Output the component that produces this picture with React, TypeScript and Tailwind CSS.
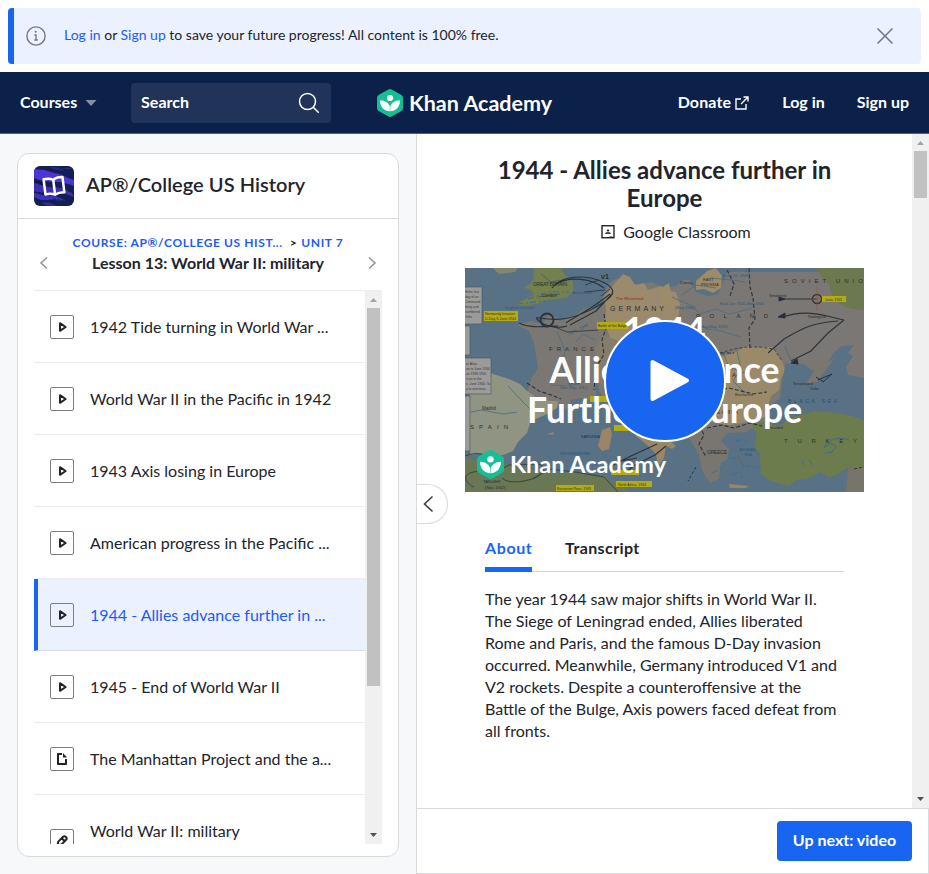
import React from "react";

type Kind = "video" | "article" | "exercise";

const lessons: { title: string; kind: Kind; active?: boolean }[] = [
  { title: "1942 Tide turning in World War ...", kind: "video" },
  { title: "World War II in the Pacific in 1942", kind: "video" },
  { title: "1943 Axis losing in Europe", kind: "video" },
  { title: "American progress in the Pacific ...", kind: "video" },
  { title: "1944 - Allies advance further in ...", kind: "video", active: true },
  { title: "1945 - End of World War II", kind: "video" },
  { title: "The Manhattan Project and the a...", kind: "article" },
  { title: "World War II: military", kind: "exercise" },
];

function LessonIcon({ kind }: { kind: Kind }) {
  return (
    <svg width="24" height="24" viewBox="0 0 24 24" fill="none" className="shrink-0">
      <rect x="0.5" y="0.5" width="23" height="23" rx="1.5" stroke="#7d7e83" />
      {kind === "video" && (
        <path d="M10 8.200v7.600l5.600-3.800z" stroke="#21242c" strokeWidth="2" strokeLinejoin="round" />
      )}
      {kind === "article" && (
        <>
          <path d="M12 7H8v10h8v-5" stroke="#21242c" strokeWidth="2" strokeLinejoin="round" />
          <path d="M13 6v4.500h4z" fill="#21242c" />
        </>
      )}
      {kind === "exercise" && (
        <path
          d="M7.500 16l.8-3.400 4.800-4.800a1.800 1.800 0 0 1 2.500 0l.5.5a1.800 1.800 0 0 1 0 2.500l-4.800 4.800-3.800.4zM12 9.500l2.800 2.800"
          stroke="#21242c"
          strokeWidth="2"
          strokeLinejoin="round"
        />
      )}
    </svg>
  );
}

function Leaf({ size }: { size: number }) {
  return (
    <svg width={size} height={size * 1.077} viewBox="0 0 26 28" className="shrink-0">
      <path
        d="M11.400.5a3.300 3.300 0 0 1 3.200 0l9.800 5.600A3.200 3.200 0 0 1 26 8.900v10.200a3.200 3.200 0 0 1-1.600 2.800l-9.800 5.600a3.300 3.300 0 0 1-3.200 0l-9.800-5.600A3.200 3.200 0 0 1 0 19.100V8.900a3.200 3.200 0 0 1 1.600-2.800z"
        fill="#14bf96"
      />
      <circle cx="13" cy="9" r="3.100" fill="#fff" />
      <path d="M2.900 11.300c5.600 0 9.200 3.200 10.100 6.800.9-3.600 4.500-6.800 10.100-6.800 0 6.400-4.200 11-10.100 11s-10.100-4.600-10.100-11z" fill="#fff" />
      <path d="M13 17.500v4.800" stroke="#14bf96" strokeWidth=".5" />
    </svg>
  );
}

function Wordmark({ width }: { width: number }) {
  return (
    <svg width={width} height={32} overflow="visible" className="shrink-0">
      <text
        x="0"
        y={24}
        fill="#fff"
        fontFamily="Lato, sans-serif"
        fontSize={width > 150 ? 23.5 : 21.500}
        fontWeight="700"
        textLength={width}
        lengthAdjust="spacingAndGlyphs"
      >
        Khan Academy
      </text>
    </svg>
  );
}

function CourseIcon() {
  return (
    <svg width="40" height="40" viewBox="0 0 40 40" className="shrink-0 rounded-md">
      <rect width="40" height="40" fill="#11204f" />
      <g fill="#4b34d8">
        <path d="M0 3c5 1 9 0 14 2s11 2 16 5 8 3 10 4v6c-6-2-11-4-18-4S6 15 0 12z" />
        <path d="M15 1c5-1 12 2 17 1s6 1 6 1-7 0-9 1-8 0-14-3z" opacity=".45" />
        <path d="M0 17c8 1 12 4 19 4s12 3 19 6l2 4c-8-3-13-5-20-4S7 28 0 25z" opacity=".75" />
        <path d="M0 27c7 1 12 4 17 3s10 3 15 5c-8 0-12-2-18-1S4 33 0 31z" opacity=".8" />
        <path d="M7 37c4-1 8-1 12 1l4 2h-8c-3 0-5-2-8-3z" opacity=".5" />
      </g>
      <path d="M0 15l11 2-6 1 13 3m-18 5 11 1m8 6 12 2M25 2l10 3M2 34l15 2" stroke="#11204f" strokeWidth="1" strokeDasharray="3 1" />
      <path
        d="M20 13.700c-2.600-1.700-6-2.100-9.500-1.600v15.300c3.300-.5 6.900 0 9.500 1.300 2.600-1.300 6.200-1.800 9.500-1.300V12.100c-3.500-.5-6.900-.1-9.500 1.600zv15"
        transform="rotate(-7 20 20)"
        fill="none"
        stroke="#fff"
        strokeWidth="2.500"
        strokeLinejoin="round"
      />
    </svg>
  );
}

function Chevron({ right, color }: { right?: boolean; color: string }) {
  return (
    <svg width="9" height="16" viewBox="0 0 9 16" fill="none">
      <path d={right ? "M1 2.500 7 8l-6 5.500" : "M8 2.500 2 8l6 5.500"} stroke={color} strokeWidth="1.500" />
    </svg>
  );
}

function Scrollbar({ thumb }: { thumb: string }) {
  return (
    <div className="flex h-full w-[17px] shrink-0 flex-col items-center bg-[#f0f0f0]">
      <svg width="17" height="17" viewBox="0 0 17 17" className="shrink-0">
        <path d="M5 11h7L8.500 7z" fill="#a3a3a3" />
      </svg>
      <div className={`w-[13px] bg-[#c1c1c1] ${thumb}`} />
      <svg width="17" height="17" viewBox="0 0 17 17" className="mt-auto shrink-0">
        <path d="M5 6h7l-3.500 4z" fill="#505050" />
      </svg>
    </div>
  );
}

function MapArt() {
  return (
    <svg width="399" height="224" viewBox="0 0 399 224" className="absolute inset-0" fontFamily="Liberation Sans, sans-serif">
      <rect width="399" height="224" fill="#587184" />
      <path d="M28 0h25l-3 4-16 2z" fill="#84866f" />
      {/* Continental land */}
      <path
        d="M104 54l12-6 14-4 8-14 5-14 8-5 10 0 12 6 14-3 12 6 12-2 8-6 6 0 6 12 12 4 10-2 6-14 3-8h137v110l-40 10-34 0-5 14-10 12-14 10-34 4-12 4-16-10-20-8-20-4-22 2-14-8-14-6-10-10-4-40z"
        fill="#7a7775"
      />
      {/* France */}
      <path d="M54 56l12-3 12 3 4-8 9 1 3 4 12-3 13-9 9-3 12 8 5 14-6 15 3 18-9 18-3 9 2 10-4 4-12-4-10 2-5 10-5-3-13-3-13-3-9-6 6-18 6-9-4-25-5-12-10-5z" fill="#7b7773" />
      {/* Spain and Balearics */}
      <path d="M5 103l20 2 19 6 11 5 7 7 9 6 13 4 9 0-1 7-12 7-14 6-4 12-9 9-5 9-13 5-13-3-17 2V104z" fill="#909482" />
      {/* Great Britain */}
      <path d="M69 0h27l3 6 9 7 0 11-7 6-18 2-11 4-16 2-5-2 9-5 9-4-3-5-7-2 7-5 3-5-1-6z" fill="#74804f" />
      <path d="M76 6l10 8 9-2M73 29l22-3" stroke="#4d674c" fill="none" />
      {/* Germany */}
      <path d="M150 15l8-9 7 3 5 8 9-2 4 7 13-4 7 5 8 1 4 12-2 15 4 12-9 7-14-4-9-2-8 11-18 0-14-5-5-14 1-17-3-9z" fill="#9b8a6c" />
      <path d="M231 13l11-10 9-3 6 8-1 12-8 5-9-4-8 1zM196 20l8-5 4 20-4 6-8-3z" fill="#9e8b68" />
      <path d="M139 67l12 6 22 1 15 7 17-4 11 10-2 14-15 4-7-6-24 4-10 11-18 7-9-10 3-13-4-17z" fill="#857d6c" />
      {/* Romania and Bulgaria */}
      <path d="M218 70l14 2 14 7 9 10 14-4 12-7 12 1 15 0 9 14 3 9-4 8-2 12-8 6-3 12 3 8-13 3-16 4-18 3-14-4-12-12-3-14z" fill="#9b8a6a" />
      {/* Soviet corner */}
      <path d="M350 0h49v42l-12-1-9-3-10-8-4-14-7-7z" fill="#6c784f" />
      {/* Black Sea and Azov */}
      <path d="M320 96l12-1 8 2 8 6 5-6 9-1 6-10 8-8 13-1-6 8 5 3-7 11 2 8 16 3v40l-11-5-22-3-26 4-13 8-18 4-8-8 4-12 10-8 2-16 3-15z" fill="#587184" />
      <path d="M349 103l-3-6 8-7 4 6 11-5-8 11-9 12-11 2z" fill="#7b776e" />
      {/* Turkey */}
      <path d="M286 156l10-2 18 4 12-8 23-7 23 2 15 3 12 4v62l-16-15-10 7-9 3-8-5-15 7-10 1-7 6-19-5-9-7-1-17-6-13 3-9z" fill="#6c7c4d" />
      <path d="M359 180l6-5 6 3-4 6-7 1M337 192l2 5m5-5 4 5M359 179c6-10 17-10 25-7" stroke="#3f6c83" fill="none" />
      <path d="M383 201l16-3v26h-18z" fill="#77746a" />
      {/* Greece, Italy and islands */}
      <path d="M232 150l14 4 20 4 20 0-4 6-20 1-6 8 8 8-2 10-6 4-2 16-9 4-8-12-3-16-8-14-6-12z" fill="#797670" />
      <path d="M137 162l8-3 2 7-3 15-7 2-4-5zM176 160l10 6 12 6 4-2 9 8-4 3-6-3-2 12-6 8-2-12-10-10-10-8zM82 166l7-2-1 3zM264 216l20 2-3 2-16 0z" fill="#9b8566" />
      {/* North Africa */}
      <path d="M0 190l17 2 26 4 22 6 28 3 22-1 15 3 10 0 6 7 10-2 7 8v4H0z" fill="#697754" />
      <path d="M0 188c12-5 24-2 28 7s-16 7-23 10-5 10 4 14M29 205l15-8 29-1c11 3 4 12-6 15s-24 5-30-1M67 211l18-10 25 3 29 5 14 15" stroke="#34463d" fill="none" />
      {/* Rivers */}
      <g fill="none" stroke="#4b6c7e" strokeWidth=".8">
        <path d="M92 64l8 18-3 17 9 19m5-44 7-8 12 6m-44 45 22 1 18-8M43 118l14 15 12 12M2 145l14-3 22 4 14-2M207 29l20 9 8 8 16-5 13 5 9-2 14-4M217 27l14-10 20 3M232 75l12 10 15 2 5 12 16 6M272 83l4 18-8 12 12 12M226 53l16 8 14 2 20 6M245 10l22 2 13 2M249 133l-8 8 12 8M320 78l5 13 9 5" />
      </g>
      {/* Borders and troop movements */}
      <g fill="none" stroke="#2a333b">
        <path d="M87 20c9-14 35-12 46-8s19 10 12 17-29 20-48 22-31-5-23 2 22 7 28 5M90 17c14-10 38-6 49 3M101 55c10-7 26-14 44-29M148 25l-17 18-26 14M54 55c12 6 28 3 39 3" strokeWidth="1.100" />
        <circle cx="82" cy="52" r="6.500" strokeWidth="1.800" />
        <path d="M120 17l14-5m-15 12 21-2M136 28l9-7M85 57l17 7 31-2" strokeWidth=".8" />
        <path d="M62 115l12 8 12 4 10 4m43-85 2 14-4 12 2 14-8 14-2 22M222 70l9 4 8 13 10-2 20 0M285 80l-1-20 6-9-2-21-3-11-1-19M262 2l7 14-4 12M232 152l7 15-5 9 7 13M242 160l15-3 12 3 16-5 12 3M234 112l10 12 20-4 24 6 14-2M209 67l10 7 15 2" strokeDasharray="4 2" strokeWidth="1.100" />
        <path d="M255 85l14-4 12-2 14 0 14 2 8 12" strokeDasharray="3 2" strokeWidth=".8" />
        <path d="M352 31h-38M379 52l-16 13-17 18-20 10M318 49c22-8 40-2 61 3M373 53c-32 2-42 12-54 18l-16 14M192 176l-26 12-20 10M157 207l13-10 20-10 11-9M156 193l16-3" strokeWidth="1.100" />
        <path d="M353 112l14-6-9 8m-7-5 8 5" />
        <path d="M389 201l10-2M231 199l-8 14" strokeDasharray="3 2" />
      </g>
      <path d="M314 29l6 2-6 2zM313 49l7-4 0 5zM326 95l6-4 1 5z" fill="#26303a" stroke="#26303a" />
      <g fill="none" stroke="#456f86" strokeWidth="1.200">
        <path d="M247 205l10-5m11 7 7-4 3 8m-13-21 9 0 5 9m-9-27 13 2m-1 8 13 3-5 8m-10 5 15 1M63 31l21-7 20 0M52 36l29-3" strokeDasharray="6 3 2 2" />
      </g>
      <circle cx="352" cy="31" r="4.500" fill="none" stroke="#3d3033" strokeWidth="1.500" />
      <path d="M352 18v25M347 31h11" stroke="#98573f" strokeWidth=".6" />
      {/* Highlighted callouts */}
      <g fill="#b3ab14">
        <path d="M19 43h34v10H19zM132 54h31v7h-31zM357 28h24v6h-24zM125 128h25v6h-25zM149 157h30v6h-30zM91 217h38v6H91zM146 202h28v5h-28zM151 213h36v6h-36z" />
      </g>
      <g fontSize="3.500" fill="#35341b">
        <text x="20" y="47">Normandy Invasion</text>
        <text x="20" y="52">D-Day, 6 June 1944</text>
        <text x="133" y="59">Battle of the Bulge</text>
        <text x="360" y="33">June, 1941</text>
        <text x="92" y="222">Kasserine Pass, 1943</text>
        <text x="153" y="218">North Africa, 1943</text>
      </g>
      {/* Margin notes */}
      <g fill="#9b9b99" stroke="#4b5558" strokeWidth=".6">
        <path d="M-1 19h18v37H-1zM-1 58h6v29h-6zM-1 90h27v36H-1zM-1 128h6v55h-6z" />
      </g>
      <g fontSize="3.300" fill="#38393b">
        <text x="0" y="25">Hitler, but</text>
        <text x="0" y="30">day of an</text>
        <text x="0" y="35">Command</text>
        <text x="0" y="40">hting and</text>
        <text x="0" y="45">numbered</text>
        <text x="0" y="50">if the</text>
        <text x="1" y="97">er Atlas</text>
        <text x="1" y="102">on to June 1944</text>
        <text x="1" y="107">on 1939-1945</text>
        <text x="1" y="112">s on or the</text>
        <text x="1" y="117">s, June 1944. To</text>
        <text x="1" y="122">y to overseas</text>
      </g>
      {/* Place names */}
      <g fill="#29302f" fontSize="6">
        <text x="84" y="83" textLength="45">FRANCE</text>
        <text x="145" y="43" fontSize="7" textLength="54">GERMANY</text>
        <text x="5" y="161" textLength="38">SPAIN</text>
        <text x="231" y="50" textLength="72">POLAND</text>
        <text x="319" y="15" textLength="79">SOVIET UNIO</text>
        <text x="319" y="175" textLength="73">TURKEY</text>
        <text x="323" y="135" fontSize="5" fill="#2f4d64" textLength="49">BLACK SEA</text>
        <text x="233" y="109" textLength="38">ROMANIA</text>
        <text x="236" y="146" textLength="37">BULGARIA</text>
        <text x="242" y="186" fontSize="5" textLength="20">GREECE</text>
        <text x="68" y="18" fontSize="5" textLength="34">GREAT BRITAIN</text>
        <text x="77" y="29" fontSize="4.500">London</text>
        <text x="136" y="11" fontSize="7" fontWeight="700">v1</text>
        <text x="151" y="32" fontSize="4" fill="#a0442e" fontWeight="700">The Rhineland</text>
        <text x="116" y="170" fontSize="4">SARDINIA</text>
        <text x="17" y="142" fontSize="4.500">Madrid</text>
        <text x="18" y="215" fontSize="4">TANGIER</text>
        <text x="20" y="221" fontSize="4">(Nov. 1942)</text>
        <text x="238" y="13" fontSize="4">EAST</text>
        <text x="236" y="18" fontSize="4">PRUSSIA</text>
        <text x="215" y="16" fontSize="4">Danzig</text>
        <text x="304" y="29" fontSize="4">Smolensk</text>
        <text x="343" y="50" fontSize="4">Stalingrad</text>
        <text x="328" y="117" fontSize="4">Sevastopol</text>
        <text x="345" y="122" fontSize="4">Yalta</text>
        <text x="270" y="128" fontSize="4">Bucharest</text>
        <text x="304" y="161" fontSize="4">Istanbul</text>
      </g>
      <g fontSize="4" fill="#2e587d">
        <text x="40" y="41">English Channel</text>
        <text x="107" y="26">Amsterdam</text>
        <text x="210" y="41">(May 1940)</text>
        <text x="255" y="37">East Jan 1945-Nov 1944</text>
        <text x="234" y="60">(May-May 1941)</text>
        <text x="257" y="9">(June 22, 1941)</text>
        <text x="103" y="117">VICHY</text>
        <text x="95" y="121" fontSize="3.500">(Nov.-Sept. 1942)</text>
        <text x="95" y="187" fontSize="3.500">MEDITERRANEAN</text>
        <text x="274" y="183">AEGEAN</text>
        <text x="279" y="188">SEA</text>
        <text x="104" y="67" transform="rotate(-25 104 67)">1944 - 1945</text>
      </g>
    </svg>
  );
}

function VideoPoster() {
  return (
    <div className="relative h-[224px] w-[399px] shrink-0 overflow-hidden">
      <MapArt />
      <div className="absolute inset-x-0 top-[42px] text-center text-[35.5px] leading-[40px] font-bold whitespace-nowrap text-white">
        <div>1944</div>
        <div>Allies Advance</div>
        <div>Further in Europe</div>
      </div>
      <div className="absolute top-[181px] left-[12px] flex items-center gap-[6px]">
        <Leaf size={27} />
        <Wordmark width={156} />
      </div>
      <div className="absolute top-[52px] left-[139px] flex size-[122px] items-center justify-center rounded-full border-2 border-white bg-[#1865f2] pl-[10px]">
        <svg width="42" height="46" viewBox="0 0 42 46">
          <path d="M3.500 4v37l34.500-18.500z" fill="#fff" stroke="#fff" strokeWidth="4" strokeLinejoin="round" />
        </svg>
      </div>
    </div>
  );
}

export default function App() {
  return (
    <div className="flex h-[874px] w-[929px] flex-col overflow-hidden bg-white font-['Lato',sans-serif] text-[#21242c]">
      <div className="m-2 flex h-14 shrink-0 items-center overflow-hidden rounded-[4px] border-l-[6px] border-[#1865f2] bg-[#ebf1fe] pr-[27px] pl-3">
        <svg width="20" height="20" viewBox="0 0 20 20" fill="none" className="shrink-0">
          <circle cx="10" cy="10" r="9.100" stroke="#717580" strokeWidth="1.400" />
          <circle cx="9.700" cy="5.800" r="1" fill="#717580" />
          <path d="M8.400 9h1.600v5m-1.700 0h3.500" stroke="#717580" strokeWidth="1.300" />
        </svg>
        <p className="ml-[18px] pb-[2px] text-[14px] leading-5 whitespace-nowrap">
          <a className="text-[#1f5cf5]">Log in</a> or <a className="text-[#1f5cf5]">Sign up</a> to save your future progress! All content is 100% free.
        </p>
        <svg width="18" height="18" viewBox="0 0 18 18" className="ml-auto shrink-0" stroke="#717580" strokeWidth="1.500">
          <path d="M1.500 1.500l15 15m0-15-15 15" />
        </svg>
      </div>

      <header className="flex h-[62px] shrink-0 items-center border-b border-[#545f7d] bg-[#0b2149] px-5 text-[16px] font-bold text-white">
        <span className="w-[65px] pb-[2px]">Courses</span>
        <svg width="12" height="6" viewBox="0 0 12 6">
          <path d="M.5 0h11L6 6z" fill="#858fa4" />
        </svg>
        <div className="ml-[34px] flex h-10 w-[200px] items-center justify-between rounded-[4px] bg-[#213358] px-[10px]">
          <span className="pb-[2px] tracking-[0.05px]">Search</span>
          <svg width="24" height="24" viewBox="0 0 24 24" fill="none" stroke="#fff" strokeWidth="1.500" strokeLinecap="round">
            <circle cx="10.500" cy="10.500" r="8" />
            <path d="m16.500 16.500 4.800 4.800" />
          </svg>
        </div>
        <div className="ml-[46px] flex items-center gap-[6px]">
          <Leaf size={26} />
          <Wordmark width={143} />
        </div>
        <nav className="ml-auto flex items-center gap-8 pb-[2px]">
          <span className="flex items-center gap-[5px]">
            <span className="tracking-[0.15px]">Donate</span>
            <svg width="14" height="14" viewBox="0 0 14 14" fill="none" stroke="#fff" strokeWidth="1.400" className="relative top-px -left-px">
              <path d="M6 3H1v10h10V8M8.500 1H13v4.500M13 1 6 8" />
            </svg>
          </span>
          <span>Log in</span>
          <span>Sign up</span>
        </nav>
      </header>

      <main className="flex min-h-0 flex-1">
        <aside className="w-[416px] shrink-0 bg-[#f7f8fa] pt-[19px] pl-[17px]">
          <div className="flex h-[704px] w-[382px] flex-col rounded-[12px] border border-[#d8dadd] bg-white px-4">
            <div className="-mx-4 flex h-[65px] shrink-0 items-center gap-3 border-b border-[#d8dadd] px-4">
              <CourseIcon />
              <h2 className="pb-[4px] text-[20px] leading-6 font-semibold tracking-[0.05px] whitespace-nowrap">AP®/College US History</h2>
            </div>
            <div className="flex h-[72px] shrink-0 items-center justify-between border-b border-[#ededee] px-[5px] pt-4">
              <Chevron color="#909196" />
              <div className="-mt-[18px] flex flex-col items-center whitespace-nowrap">
                <div className="flex text-[12px] leading-4 font-bold tracking-[0.6px] text-[#1f5cf5]">
                  <span>COURSE: AP®/COLLEGE US HIST...</span>
                  <span className="mr-1 ml-[7px] text-[#21242c]">&gt;</span>
                  <span>UNIT 7</span>
                </div>
                <div className="mt-[2px] text-[16px] leading-5 font-bold">Lesson 13: World War II: military</div>
              </div>
              <Chevron right color="#909196" />
            </div>
            <div className="flex h-[553px] shrink-0 overflow-hidden">
              <ul className="h-full min-w-0 flex-1 overflow-hidden">
                {lessons.map((l) => (
                  <li
                    key={l.title}
                    className={
                      l.active
                        ? "flex h-[72px] items-center gap-4 border-b border-l-4 border-b-[#d8deea] border-l-[#1865f2] bg-[#ebf1fe] pl-3 text-[#1f5cf5]"
                        : "flex h-[72px] items-center gap-4 border-b border-[#ededee] pl-4"
                    }
                  >
                    <span className={l.kind === "exercise" ? "mt-[20px]" : ""}>
                      <LessonIcon kind={l.kind} />
                    </span>
                    <span className="text-[16px] leading-5 whitespace-nowrap">{l.title}</span>
                  </li>
                ))}
              </ul>
              <Scrollbar thumb="h-[378px]" />
            </div>
          </div>
        </aside>

        <section className="relative flex min-w-0 flex-1 flex-col border-l border-[#d8dadd]">
          <div className="flex h-[674px] shrink-0">
            <div className="flex min-w-0 flex-1 flex-col items-center pt-[22px]">
              <h1 className="w-[399px] text-center text-[24px] leading-7 font-bold">1944 - Allies advance further in Europe</h1>
              <div className="mt-[10px] ml-[23px] flex items-center gap-2 text-[16px] leading-5">
                <svg width="14" height="14" viewBox="0 0 14 14" fill="none">
                  <rect x="1" y=".75" width="12" height="12" stroke="#111" strokeWidth="1.300" />
                  <circle cx="7" cy="5.500" r="1.100" fill="#111" />
                  <path d="M4.200 8.500C4.200 7 9.800 7 9.800 8.500zM8.500 11.500h3" fill="#111" stroke="#111" strokeWidth=".5" />
                </svg>
                <span>Google Classroom</span>
              </div>
              <div className="mt-[26px]">
                <VideoPoster />
              </div>
              <div className="mt-[44px] flex h-9 w-[359px] gap-[33px] border-b border-[#d3d4d7] text-[16px] leading-5 font-bold">
                <span className="h-9 w-[47px] border-b-[5px] border-[#1865f2] pt-[2px] tracking-[0.6px] text-[#1865f2]">About</span>
                <span className="pt-[2px] tracking-[0.4px]">Transcript</span>
              </div>
              <p className="mt-[16px] w-[359px] text-[16px] leading-[22px] whitespace-nowrap">
                The year 1944 saw major shifts in World War II.<br />
                The Siege of Leningrad ended, Allies liberated<br />
                Rome and Paris, and the famous D-Day invasion<br />
                occurred. Meanwhile, Germany introduced V1 and<br />
                V2 rockets. Despite a counteroffensive at the<br />
                Battle of the Bulge, Axis powers faced defeat from<br />
                all fronts.
              </p>
            </div>
            <Scrollbar thumb="h-[47px]" />
          </div>
          <footer className="flex flex-1 items-center justify-end border-t border-r border-b border-[#d8dadd] pr-4">
            <button className="h-10 w-[135px] rounded-[4px] bg-[#1865f2] pb-[2px] text-[16px] leading-5 font-bold text-white">Up next: video</button>
          </footer>
          <button className="absolute top-[350px] left-0 flex h-10 w-[31px] items-center rounded-r-[20px] border border-l-0 border-[#d8dadd] bg-white pl-[6px]">
            <svg width="11" height="18" viewBox="0 0 11 18" fill="none">
              <path d="m9.500 1.500-8 7.500 8 7.500" stroke="#3b3e47" strokeWidth="1.600" />
            </svg>
          </button>
        </section>
      </main>
    </div>
  );
}
